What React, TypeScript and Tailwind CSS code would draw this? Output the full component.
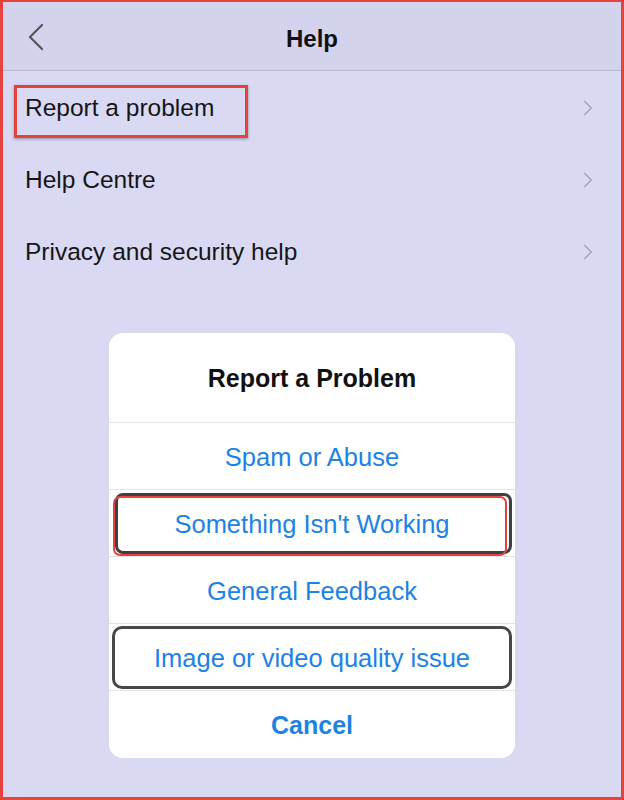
import { ChevronRight } from "lucide-react";

const font = { fontFamily: '"Liberation Sans", Arial, sans-serif' };

const rows = ["Report a problem", "Help Centre", "Privacy and security help"];

const options = [
  "Spam or Abuse",
  "Something Isn't Working",
  "General Feedback",
  "Image or video quality issue",
];

export default function App() {
  return (
    <div
      className="relative w-[624px] h-[800px] bg-[#d9d9f4] border-[3px] border-t-2 border-[#e5433b] overflow-hidden flex flex-col"
      style={font}
    >
      {/* header */}
      <div className="relative h-[69px] shrink-0 bg-[#d3d3ed] border-b border-[#b9b9d2] flex items-center justify-center">
        <svg
          className="absolute left-[24px] top-[20px]"
          width="18"
          height="30"
          viewBox="0 0 18 30"
          fill="none"
          stroke="#555"
          strokeWidth="2.2"
          strokeLinecap="round"
          strokeLinejoin="round"
        >
          <path d="M15 3 L3 15 L15 27" />
        </svg>
        <h1 className="text-[24px] font-bold text-[#111] mt-[6px]">Help</h1>
      </div>

      {/* rows */}
      <div className="flex flex-col">
        {rows.map((r, i) => (
          <div key={r} className="relative h-[72px] flex items-center justify-between pl-[22px] pr-[20px] pt-[2px]">
            <span className="text-[24.5px] text-[#151515]">{r}</span>
            <ChevronRight size={26} strokeWidth={1.3} className="text-[#a2a2ab]" />
            {i === 0 && (
              <div className="absolute left-[11px] top-[14px] w-[234px] h-[53px] border-[3px] border-[#e0443c] shadow-[0_1px_3px_rgba(0,0,0,0.35)]" />
            )}
          </div>
        ))}
      </div>

      {/* action sheet */}
      <div className="mt-[46px] mx-auto w-[406px] bg-white rounded-[14px] flex flex-col overflow-hidden">
        <div className="h-[90px] pt-[3px] flex items-center justify-center border-b border-[#e4e4e8]">
          <span className="text-[25px] font-bold text-[#111]">Report a Problem</span>
        </div>
        {options.map((o, i) => (
          <div
            key={o}
            className="relative h-[67px] pt-[3px] flex items-center justify-center border-b border-[#e4e4e8]"
          >
            <span className="text-[25.5px] text-[#1d82e6]">{o}</span>
            {i === 1 && (
              <>
                <div className="absolute left-[6px] right-[3px] top-[3px] bottom-[2px] border-[3px] border-[#3f3f44] rounded-[8px]" />
                <div className="absolute left-[4px] right-[8px] top-[6px] bottom-0 border-2 border-[#e5423b] rounded-[7px]" />
              </>
            )}
            {i === 3 && (
              <div className="absolute left-[3px] right-[3px] top-[2px] bottom-[1px] border-[3px] border-[#46464b] rounded-[10px]" />
            )}
          </div>
        ))}
        <div className="h-[67px] pt-[3px] flex items-center justify-center">
          <span className="text-[25px] font-bold text-[#1d82e6]">Cancel</span>
        </div>
      </div>
    </div>
  );
}
